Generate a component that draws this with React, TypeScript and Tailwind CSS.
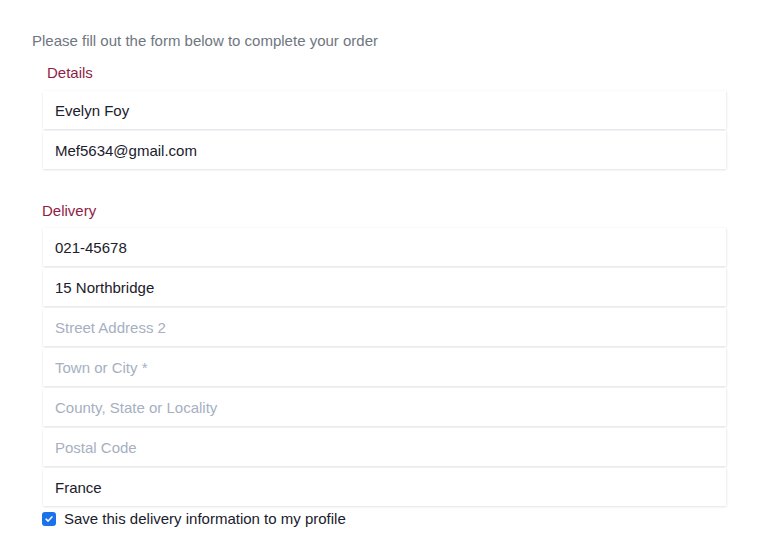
const details = [
  { value: "Evelyn Foy" },
  { value: "Mef5634@gmail.com" },
];

const delivery = [
  { value: "021-45678" },
  { value: "15 Northbridge" },
  { placeholder: "Street Address 2" },
  { placeholder: "Town or City *" },
  { placeholder: "County, State or Locality" },
  { placeholder: "Postal Code" },
  { value: "France" },
];

function Field({ value, placeholder }: { value?: string; placeholder?: string }) {
  return (
    <div className="h-[38px] bg-white shadow-[0_1px_2px_rgba(60,80,110,0.14),1px_0_2px_rgba(60,80,110,0.06)] flex items-center pl-[12px] pt-[2px]">
      {value ? (
        <span className="text-[#1a202c]">{value}</span>
      ) : (
        <span className="text-[#a6b0bf]">{placeholder}</span>
      )}
    </div>
  );
}

export default function App() {
  return (
    <div
      className="min-h-screen bg-white pl-[32px] pt-[32px] text-[15px] leading-[18px]"
      style={{ fontFamily: '"Liberation Sans", Arial, sans-serif' }}
    >
      {/* Intro */}
      <p className="text-[#6f7680]">Please fill out the form below to complete your order</p>

      {/* Details */}
      <div className="mt-[14px] ml-[15px] text-[#8f1d46]">Details</div>
      <div className="mt-[9px] ml-[11px] w-[683px] flex flex-col gap-[2px]">
        {details.map((f, i) => (
          <Field key={i} {...f} />
        ))}
      </div>

      {/* Delivery */}
      <div className="mt-[33px] ml-[10px] text-[#8f1d46]">Delivery</div>
      <div className="mt-[8px] ml-[11px] w-[683px] flex flex-col gap-[2px]">
        {delivery.map((f, i) => (
          <Field key={i} {...f} />
        ))}
      </div>

      {/* Save checkbox */}
      <label className="mt-[4px] ml-[10px] flex items-center gap-[8px] text-[#1a202c]">
        <span className="w-[14px] h-[14px] rounded-[3px] bg-[#1a73e8] flex items-center justify-center">
          <svg viewBox="0 0 12 12" className="w-[10px] h-[10px]">
            <path d="M2.5 6.2 L5 8.5 L9.5 3.5" fill="none" stroke="white" strokeWidth="1.8" strokeLinecap="round" strokeLinejoin="round" />
          </svg>
        </span>
        <span>Save this delivery information to my profile</span>
      </label>
    </div>
  );
}
